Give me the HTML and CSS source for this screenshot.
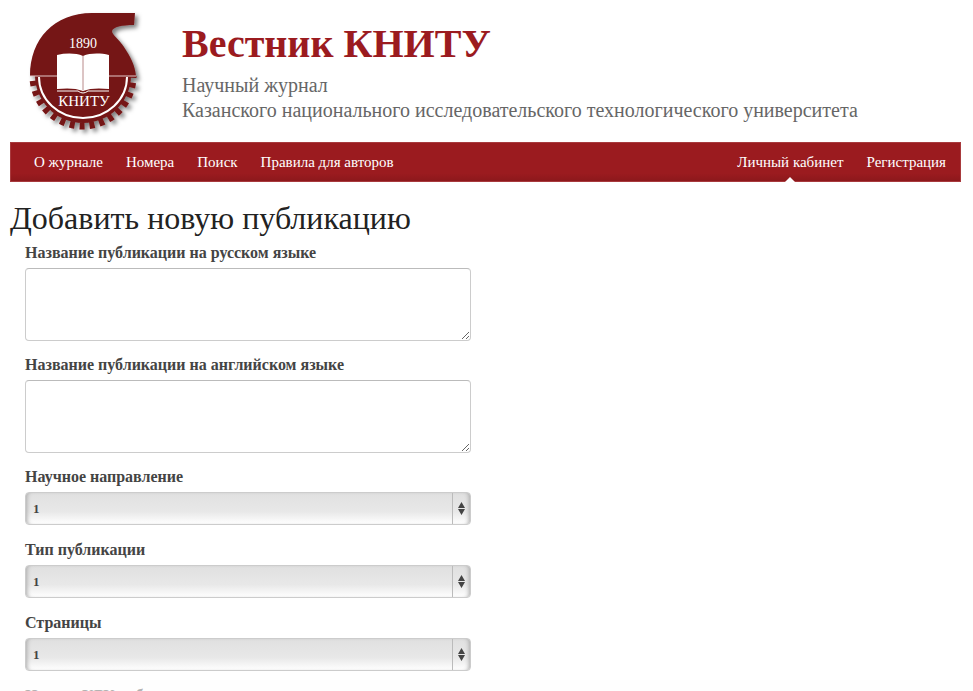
FILE: index.html
```html
<!DOCTYPE html>
<html lang="ru">
<head>
    <meta charset="UTF-8">
    <meta name="viewport" content="width=device-width, initial-scale=1.0">
    <title>Вестник КНИТУ</title>
    <link rel="stylesheet" href="styles.css">
</head>
<body>
    <header class="header">
        <a href="#" class="logo">
            <svg width="130" height="135" viewBox="0 0 130 135">
                <defs>
                    <filter id="shadow" x="-10%" y="-10%" width="130%" height="130%">
                        <feDropShadow dx="3" dy="3" stdDeviation="2" flood-color="#000" flood-opacity="0.5"/>
                    </filter>
                </defs>
                <g filter="url(#shadow)">
                    <!-- Gear teeth -->
                    <path d="M13 71 A50 50 0 0 0 113 71" fill="none" stroke="#741516" stroke-width="7" stroke-dasharray="5 5" stroke-dashoffset="-5"/>
                    <path d="M15 70 A48 48 0 0 0 111 70 Z" fill="#741516"/>
                    <!-- Snail body -->
                    <path d="M10 71 C10 34 34 8 72 8 L115 8 L114 20 C102 20 93 22 92 26 C92 30 99 34 104 42 C110 51 115 60 116 71 Z" fill="#741516"/>
                </g>
                <path d="M10 71 H38 M88 71 H116" stroke="#e4c8c8" stroke-width="1"/>
                <path d="M19 72 A44 41 0 0 0 107 72" fill="none" stroke="#fff" stroke-width="2"/>
                <!-- Book -->
                <path d="M37 50 C46 48 56 48 63 51 C70 48 80 48 89 50 V84 C80 83 70 83 63 86 C56 83 46 83 37 84 Z" fill="#fff"/>
                <path d="M63 51 V85" stroke="#b98a8a" stroke-width="1"/>
                <path d="M37 86 H58 Q63 90 68 86 H89" fill="none" stroke="#fff" stroke-width="1"/>
                <text x="63" y="43" class="logo-text">1890</text>
                <text x="64" y="101" class="logo-text logo-name">КНИТУ</text>
            </svg>
        </a>
        <div class="heading">
            <h1>Вестник КНИТУ</h1>
            <p>Научный журнал<br>Казанского национального исследовательского технологического университета</p>
        </div>
    </header>

    <nav class="menu">
        <a href="#">О журнале</a>
        <a href="#">Номера</a>
        <a href="#">Поиск</a>
        <a href="#">Правила для авторов</a>
        <a href="#" class="right active">Личный кабинет</a>
        <a href="#">Регистрация</a>
    </nav>

    <main>
        <h2>Добавить новую публикацию</h2>
        <form class="form">
            <label for="title-ru">Название публикации на русском языке</label>
            <textarea id="title-ru"></textarea>

            <label for="title-en">Название публикации на английском языке</label>
            <textarea id="title-en"></textarea>

            <label for="direction">Научное направление</label>
            <div class="select">
                <select id="direction"><option>1</option></select>
                <svg class="arrows" width="7" height="13" viewBox="0 0 7 13"><path d="M3.5 0 L7 6 H0 Z M0 7 H7 L3.5 13 Z" fill="#444"/></svg>
            </div>

            <label for="type">Тип публикации</label>
            <div class="select">
                <select id="type"><option>1</option></select>
                <svg class="arrows" width="7" height="13" viewBox="0 0 7 13"><path d="M3.5 0 L7 6 H0 Z M0 7 H7 L3.5 13 Z" fill="#444"/></svg>
            </div>

            <label for="pages">Страницы</label>
            <div class="select">
                <select id="pages"><option>1</option></select>
                <svg class="arrows" width="7" height="13" viewBox="0 0 7 13"><path d="M3.5 0 L7 6 H0 Z M0 7 H7 L3.5 13 Z" fill="#444"/></svg>
            </div>

            <label for="udc">Индекс УДК публикации</label>
            <input type="text" id="udc">
        </form>
    </main>
    <div class="bottom-fade"></div>
</body>
</html>
```

FILE: styles.css
```css
body, html {
    margin: 0;
    padding: 0;
}
body {
    background: #fff;
    font-family: "Liberation Serif", Georgia, serif;
    color: #444;
}
.header {
    display: flex;
    padding: 5px 20px 0;
    height: 137px;
    box-sizing: border-box;
}
.logo {
    width: 130px;
    margin-right: 32px;
}
.logo-text {
    font-size: 14px;
    fill: #fff;
    text-anchor: middle;
}
.logo-name {
    font-size: 15px;
}
.heading h1 {
    margin: 17px 0 7px;
    font-size: 40px;
    line-height: 44px;
    color: #9b1b1f;
}
.heading p {
    margin: 0;
    font-size: 20px;
    line-height: 25px;
    color: #666;
    white-space: nowrap;
}
.menu {
    display: flex;
    align-items: center;
    gap: 23px;
    height: 40px;
    margin: 5px 12px 0 10px;
    padding: 0 14px 0 23px;
    box-sizing: border-box;
    background: linear-gradient(#9b1b1f 80%, #8c181b);
    border: 1px solid #a83a3d;
}
.menu a {
    position: relative;
    line-height: 38px;
    font-size: 15px;
    color: #fff;
    text-decoration: none;
    white-space: nowrap;
}
.menu .right {
    margin-left: auto;
}
/* Little notch under the current section */
.menu .active::after {
    content: "";
    position: absolute;
    bottom: -1px;
    left: 50%;
    margin-left: -5px;
    border: 5px solid transparent;
    border-top: 0;
    border-bottom-color: #fff;
}
h2 {
    margin: 17px 10px 0;
    font-size: 32px;
    line-height: 38px;
    font-weight: normal;
    color: #222;
}
.form {
    width: 46%;
    max-width: 446px;
    padding: 6px 25px;
}
.form label {
    display: block;
    margin-bottom: 5px;
    font-size: 16px;
    line-height: 20px;
    font-weight: bold;
}
.form textarea, .form input, .form select {
    display: block;
    width: 100%;
    box-sizing: border-box;
    border: 1px solid #ccc;
    border-radius: 4px;
}
.form textarea {
    height: 73px;
    margin-bottom: 14px;
    border-top-color: #bbb;
}
.form input {
    height: 33px;
}
.select {
    position: relative;
    margin-bottom: 15px;
}
.form select {
    appearance: none;
    height: 33px;
    padding: 0 7px;
    background: linear-gradient(#e0e0e0, #e8e8e8 60%, #fff);
    box-shadow: inset 4px 0 4px -3px #aaa, inset -4px 0 4px -3px #aaa;
    font: bold 13px "Liberation Serif", serif;
    color: #444;
}
.select::after {
    content: "";
    position: absolute;
    top: 1px;
    bottom: 1px;
    right: 18px;
    border-left: 1px solid #bbb;
}
.arrows {
    position: absolute;
    top: 10px;
    right: 6px;
}
/* Light strip along the bottom of the window */
.bottom-fade {
    position: fixed;
    left: 0;
    right: 0;
    bottom: 0;
    height: 11px;
    background: rgba(253, 253, 253, 0.6);
}
```
